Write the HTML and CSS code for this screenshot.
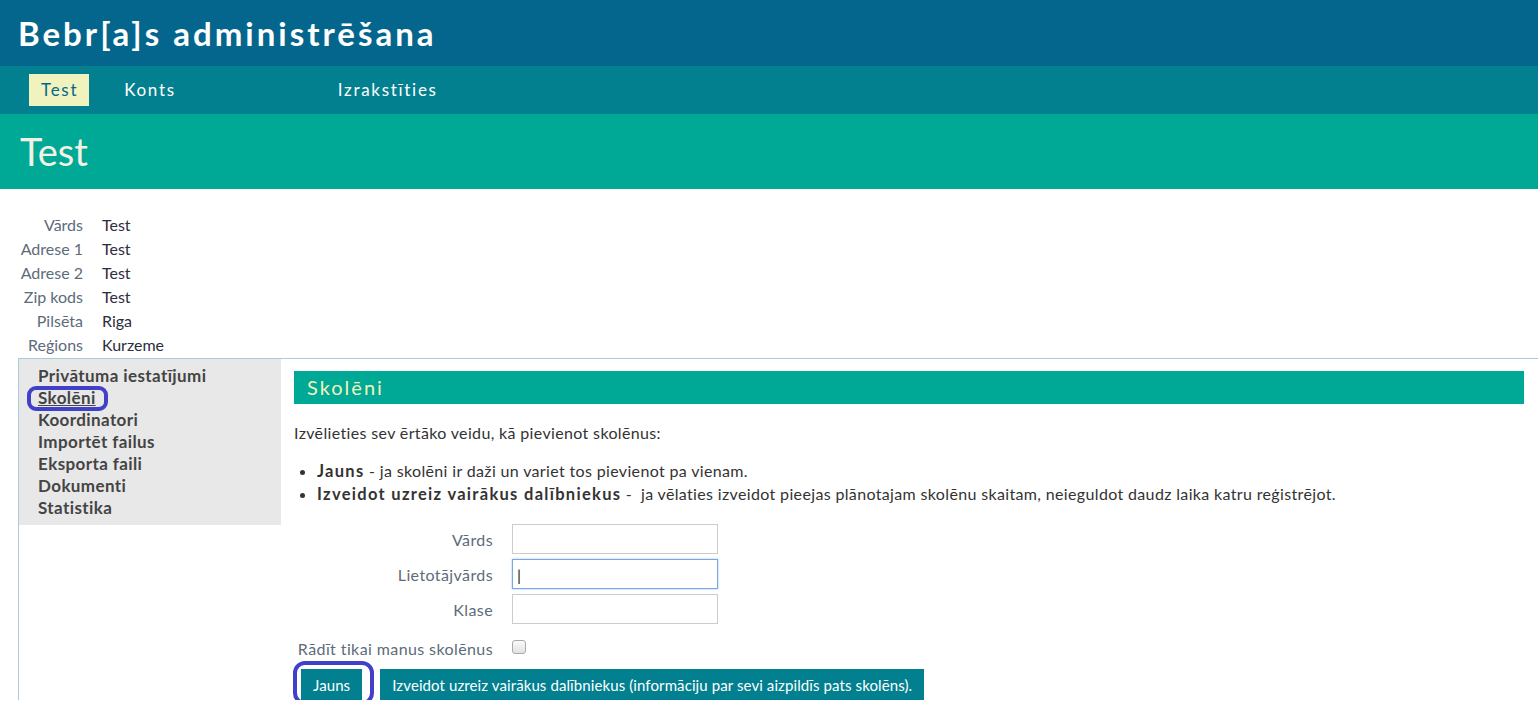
FILE: index.html
```html
<!DOCTYPE html>
<html lang="lv">
<head>
  <meta charset="UTF-8">
  <title>Bebr[a]s administrēšana</title>
  <link rel="stylesheet" href="styles.css">
</head>
<body>
  <div class="top-header">
    <h1>Bebr[a]s administrēšana</h1>
  </div>
  <div class="top-nav">
    <a href="#" class="nav-item active">Test</a>
    <a href="#" class="nav-item">Konts</a>
    <a href="#" class="nav-item logout">Izrakstīties</a>
  </div>
  <div class="page-title">
    <h2>Test</h2>
  </div>

  <div class="info-table">
    <span class="info-label">Vārds</span><span class="info-value">Test</span>
    <span class="info-label">Adrese 1</span><span class="info-value">Test</span>
    <span class="info-label">Adrese 2</span><span class="info-value">Test</span>
    <span class="info-label">Zip kods</span><span class="info-value">Test</span>
    <span class="info-label">Pilsēta</span><span class="info-value">Riga</span>
    <span class="info-label">Reģions</span><span class="info-value">Kurzeme</span>
  </div>

  <div class="panel">
    <div class="sidebar">
      <a href="#">Privātuma iestatījumi</a>
      <a href="#" class="current"><span class="mark">Skolēni</span></a>
      <a href="#">Koordinatori</a>
      <a href="#">Importēt failus</a>
      <a href="#">Eksporta faili</a>
      <a href="#">Dokumenti</a>
      <a href="#">Statistika</a>
    </div>
    <div class="content">
      <h3 class="section-title">Skolēni</h3>
      <p class="intro">Izvēlieties sev ērtāko veidu, kā pievienot skolēnus:</p>
      <ul class="options">
        <li><b>Jauns</b> - ja skolēni ir daži un variet tos pievienot pa vienam.</li>
        <li><b>Izveidot uzreiz vairākus dalībniekus</b> -&nbsp; ja vēlaties izveidot pieejas plānotajam skolēnu skaitam, neieguldot daudz laika katru reģistrējot.</li>
      </ul>
      <div class="filter-form">
        <label for="f-name">Vārds</label>
        <input type="text" id="f-name">
        <label for="f-user">Lietotājvārds</label>
        <input type="text" id="f-user" class="focused" value="|">
        <label for="f-class">Klase</label>
        <input type="text" id="f-class">
        <label for="f-mine" class="check-label">Rādīt tikai manus skolēnus</label>
        <span class="fake-check"></span>
      </div>
      <div class="actions">
        <span class="btn-mark"><button class="btn">Jauns</button></span>
        <button class="btn">Izveidot uzreiz vairākus dalībniekus (informāciju par sevi aizpildīs pats skolēns).</button>
      </div>
    </div>
  </div>
</body>
</html>
```

FILE: styles.css
```css
body {
  margin: 0;
  font-family: Lato, "Open Sans", sans-serif;
  font-size: 16px;
  color: #333;
  background: #fff;
}

.top-header {
  background-color: #05668d;
  height: 66px;
  padding-left: 18px;
}

.top-header h1 {
  margin: 0;
  color: #fff;
  font-size: 33px;
  font-weight: bold;
  letter-spacing: 3px;
  line-height: 66px;
}

.top-nav {
  background-color: #028090;
  height: 48px;
  padding-left: 29px;
  display: flex;
  align-items: center;
}

.nav-item {
  color: #fff;
  text-decoration: none;
  font-size: 17px;
  letter-spacing: 1.7px;
  padding: 4px 11px 4px 12px;
  line-height: 24px;
}

.nav-item.active {
  background-color: #f0f3bd;
  color: #05668d;
  margin-right: 23px;
}

.nav-item.logout {
  margin-left: 139px;
}

.page-title {
  background-color: #00a896;
  height: 75px;
  padding-left: 20px;
}

.page-title h2 {
  margin: 0;
  color: #f2f2e4;
  font-size: 38px;
  font-weight: normal;
  line-height: 75px;
}

.info-table {
  display: grid;
  grid-template-columns: 65px auto;
  column-gap: 19px;
  padding: 24px 0 0 18px;
  line-height: 24px;
}

.info-label {
  text-align: right;
  color: #5d6b7a;
}

.info-value {
  color: #2d2d3d;
}

.panel {
  margin: 1px 0 0 18px;
  border-top: 1px solid #a9cdd8;
  border-left: 1px solid #a9cdd8;
  display: flex;
  align-items: flex-start;
}

.sidebar {
  width: 243px;
  background-color: #e8e8e8;
  padding: 6px 0 6px 19px;
  display: flex;
  flex-direction: column;
}

.sidebar a {
  color: #444;
  font-size: 17px;
  font-weight: bold;
  letter-spacing: 0.4px;
  text-decoration: none;
  line-height: 22px;
}

.sidebar a.current {
  text-decoration: underline;
}

.mark {
  position: relative;
}

.mark::after {
  content: "";
  position: absolute;
  left: -11px;
  right: -12px;
  top: -1px;
  bottom: -3px;
  border: 4px solid #4040c8;
  border-radius: 9px;
}

.content {
  flex: 1;
  padding: 12px 14px 0 13px;
  letter-spacing: 0.35px;
}

.section-title {
  margin: 0;
  background-color: #00a896;
  color: #f0f3bd;
  font-size: 20px;
  font-weight: normal;
  letter-spacing: 2px;
  height: 33px;
  line-height: 33px;
  padding-left: 13px;
}

.intro {
  margin: 17px 0 0 0;
  line-height: 24px;
}

.options {
  margin: 14px 0 0 0;
  padding-left: 23px;
  line-height: 23px;
}

.options li {
  height: 23px;
}

.options b {
  letter-spacing: 1.3px;
  font-size: 16.5px;
}

.filter-form {
  margin-top: 19px;
  display: grid;
  grid-template-columns: 199px 206px;
  column-gap: 19px;
  row-gap: 5px;
  align-items: center;
  letter-spacing: 0.4px;
}

.filter-form label {
  text-align: right;
  color: #5d6b7a;
}

.filter-form input {
  height: 30px;
  box-sizing: border-box;
  border: 1px solid #ccc;
  padding: 0 4px;
  font-family: inherit;
  font-size: 16px;
  color: #222;
}

.filter-form input.focused {
  border: 1px solid #7aa7e6;
  box-shadow: 0 0 2px #9cc0f0;
  outline: none;
}

.filter-form .check-label {
  margin-top: 8px;
  line-height: 24px;
}

.fake-check {
  margin-top: 8px;
  margin-bottom: 4px;
  width: 12px;
  height: 12px;
  border: 1px solid #aaa;
  border-radius: 3px;
  background: linear-gradient(#fafafa, #e2e2e2);
}

.actions {
  margin-top: 8px;
  display: flex;
  gap: 18px;
  padding-left: 7px;
  letter-spacing: 0;
}

.btn {
  background-color: #028090;
  color: #fff;
  border: none;
  font-family: inherit;
  font-size: 15px;
  letter-spacing: 0.1px;
  height: 31px;
  padding: 0 12px;
}

.btn-mark {
  position: relative;
  display: inline-block;
}

.btn-mark::after {
  content: "";
  position: absolute;
  left: -8px;
  right: -12px;
  top: -8px;
  bottom: -5px;
  border: 4px solid #4040c8;
  border-radius: 12px;
}
```
